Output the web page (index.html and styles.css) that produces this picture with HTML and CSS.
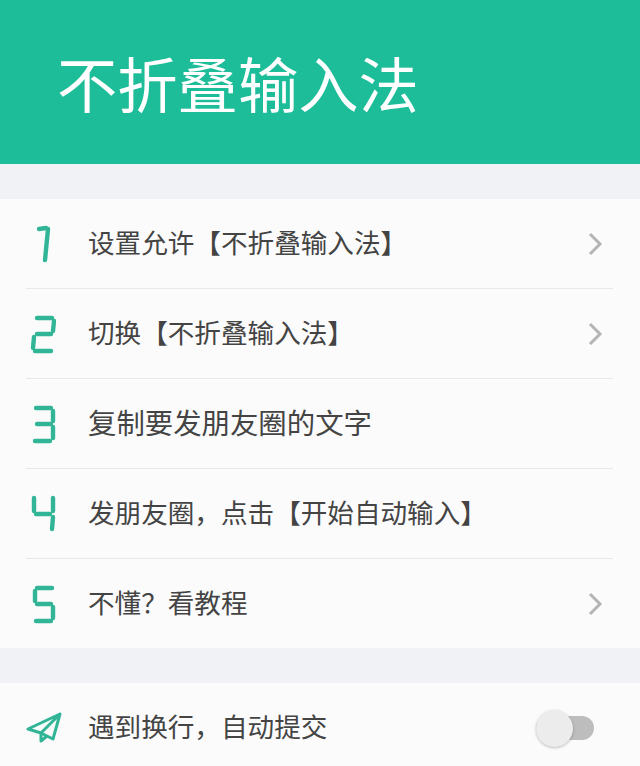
FILE: index.html
```html
<!DOCTYPE html>
<html lang="zh-CN">
<head>
    <meta charset="UTF-8">
    <meta name="viewport" content="width=device-width, initial-scale=1.0">
    <title>不折叠输入法</title>
    <link rel="stylesheet" href="styles.css">
</head>
<body>
    <header class="top-bar">
        <h1>不折叠输入法</h1>
    </header>

    <div class="group">
        <div class="row">
            <svg class="digit" viewBox="0 0 28 40"><path d="M11 5 L18 4"/><path d="M20 5 L17 36"/></svg>
            <span class="label">设置允许【不折叠输入法】</span>
            <svg class="arrow" viewBox="0 0 16 24"><path d="M3 2 L13 12 L3 22"/></svg>
        </div>
        <div class="row">
            <svg class="digit" viewBox="0 0 28 40"><path d="M9 4 H24"/><path d="M26 7 L25 17"/><path d="M9 20 H23"/><path d="M6 23 L5 34"/><path d="M7 37 H23"/></svg>
            <span class="label">切换【不折叠输入法】</span>
            <svg class="arrow" viewBox="0 0 16 24"><path d="M3 2 L13 12 L3 22"/></svg>
        </div>
        <div class="row">
            <svg class="digit" viewBox="0 0 28 40"><path d="M8 4 H23"/><path d="M25 7 V17"/><path d="M9 20 H23"/><path d="M25 23 V34"/><path d="M7 37 H22"/></svg>
            <span class="label label-big">复制要发朋友圈的文字</span>
        </div>
        <div class="row">
            <svg class="digit" viewBox="0 0 28 40"><path d="M6 4 V17"/><path d="M8 20 H22"/><path d="M25 4 V17"/><path d="M25 23 L24 35"/></svg>
            <span class="label">发朋友圈，点击【开始自动输入】</span>
        </div>
        <div class="row">
            <svg class="digit" viewBox="0 0 28 40"><path d="M9 4 H24"/><path d="M7 7 V17"/><path d="M9 20 H23"/><path d="M25 23 V34"/><path d="M8 37 H23"/></svg>
            <span class="label">不懂？看教程</span>
            <svg class="arrow" viewBox="0 0 16 24"><path d="M3 2 L13 12 L3 22"/></svg>
        </div>
    </div>

    <div class="group">
        <div class="row">
            <svg class="digit send" viewBox="0 0 36 32"><path d="M34 2 L2 17 L15 21 L34 2 L27 27 L15 21 L15 29 L21 24"/></svg>
            <span class="label">遇到换行，自动提交</span>
            <div class="switch"><div class="knob"></div></div>
        </div>
    </div>
</body>
</html>
```

FILE: styles.css
```css
html, body {
    margin: 0;
    padding: 0;
}
body {
    width: 640px;
    height: 766px;
    overflow: hidden;
    background: #f0f2f6;
    font-family: "Noto Sans CJK SC", "Noto Sans", sans-serif;
}
.top-bar {
    height: 164px;
    background: #1dbd9a;
    display: flex;
    align-items: center;
    padding-left: 57px;
}
.top-bar h1 {
    margin: 0;
    color: white;
    font-size: 60.3px;
    font-weight: 400;
    line-height: 1;
}
.group {
    margin-top: 35px;
    background: #fbfbfb;
    padding: 0 27px 0 26px;
}
.row {
    height: 89px;
    display: flex;
    align-items: center;
    border-bottom: 1px solid #e8e8e8;
}
.row:last-child {
    border-bottom: none;
}
.digit {
    width: 28px;
    height: 40px;
    margin-left: 2px;
    margin-right: 32px;
    flex-shrink: 0;
    fill: none;
    stroke: #31b596;
    stroke-width: 4.4;
    stroke-linecap: round;
    stroke-linejoin: round;
}
.send {
    width: 36px;
    height: 32px;
    margin-left: 0;
    margin-right: 26px;
    stroke-width: 3;
}
.label {
    flex: 1;
    color: #444;
    font-size: 26.6px;
    line-height: 1;
    padding-bottom: 2px;
}
.label-big {
    font-size: 28.4px;
}
.arrow {
    width: 16px;
    height: 24px;
    margin-right: 10px;
    fill: none;
    stroke: #b5b5b5;
    stroke-width: 3;
}
.switch {
    width: 58px;
    height: 24px;
    margin-right: 19px;
    border-radius: 12px;
    background: #bdbdbd;
    position: relative;
}
.knob {
    position: absolute;
    left: 0;
    top: -6px;
    width: 37px;
    height: 37px;
    border-radius: 50%;
    background: #ececec;
    box-shadow: 0 1px 3px rgba(0, 0, 0, 0.25);
}
```
